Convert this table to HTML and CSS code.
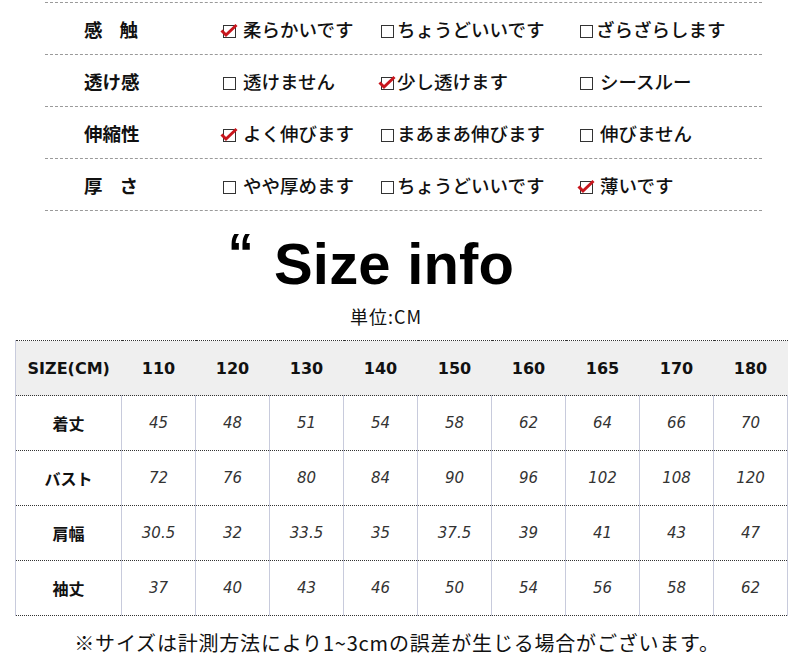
FILE: index.html
```html
<!DOCTYPE html>
<html lang="ja">
<head>
<meta charset="utf-8">
<title>Size info</title>
<link rel="stylesheet" href="styles.css">
</head>
<body>
<section class="feel">
  <div class="row">
    <div class="label">感<span class="sp"></span>触</div>
    <div class="opt"><svg class="cb" viewBox="0 0 18 16"><rect x="3.5" y="3.5" width="12" height="12" fill="#fff" stroke="#333"/><path d="M1.5 8.5 L6 13 L16.5 3" fill="none" stroke="#c8161d" stroke-width="3"/></svg>柔らかいです</div>
    <div class="opt tight"><svg class="cb" viewBox="0 0 18 16"><rect x="3.5" y="3.5" width="12" height="12" fill="#fff" stroke="#333"/></svg>ちょうどいいです</div>
    <div class="opt tight"><svg class="cb" viewBox="0 0 18 16"><rect x="3.5" y="3.5" width="12" height="12" fill="#fff" stroke="#333"/></svg>ざらざらします</div>
  </div>
  <div class="row">
    <div class="label">透け感</div>
    <div class="opt"><svg class="cb" viewBox="0 0 18 16"><rect x="3.5" y="3.5" width="12" height="12" fill="#fff" stroke="#333"/></svg>透けません</div>
    <div class="opt tight"><svg class="cb" viewBox="0 0 18 16"><rect x="3.5" y="3.5" width="12" height="12" fill="#fff" stroke="#333"/><path d="M1.5 8.5 L6 13 L16.5 3" fill="none" stroke="#c8161d" stroke-width="3"/></svg>少し透けます</div>
    <div class="opt"><svg class="cb" viewBox="0 0 18 16"><rect x="3.5" y="3.5" width="12" height="12" fill="#fff" stroke="#333"/></svg>シースルー</div>
  </div>
  <div class="row">
    <div class="label">伸縮性</div>
    <div class="opt"><svg class="cb" viewBox="0 0 18 16"><rect x="3.5" y="3.5" width="12" height="12" fill="#fff" stroke="#333"/><path d="M1.5 8.5 L6 13 L16.5 3" fill="none" stroke="#c8161d" stroke-width="3"/></svg>よく伸びます</div>
    <div class="opt tight"><svg class="cb" viewBox="0 0 18 16"><rect x="3.5" y="3.5" width="12" height="12" fill="#fff" stroke="#333"/></svg>まあまあ伸びます</div>
    <div class="opt"><svg class="cb" viewBox="0 0 18 16"><rect x="3.5" y="3.5" width="12" height="12" fill="#fff" stroke="#333"/></svg>伸びません</div>
  </div>
  <div class="row">
    <div class="label">厚<span class="sp"></span>さ</div>
    <div class="opt"><svg class="cb" viewBox="0 0 18 16"><rect x="3.5" y="3.5" width="12" height="12" fill="#fff" stroke="#333"/></svg>やや厚めます</div>
    <div class="opt tight"><svg class="cb" viewBox="0 0 18 16"><rect x="3.5" y="3.5" width="12" height="12" fill="#fff" stroke="#333"/></svg>ちょうどいいです</div>
    <div class="opt"><svg class="cb" viewBox="0 0 18 16"><rect x="3.5" y="3.5" width="12" height="12" fill="#fff" stroke="#333"/><path d="M1.5 8.5 L6 13 L16.5 3" fill="none" stroke="#c8161d" stroke-width="3"/></svg>薄いです</div>
  </div>
</section>

<h1 class="title"><span class="quote">“</span>Size info</h1>
<p class="unit">単位:CM</p>

<table class="size">
  <thead>
    <tr><th class="first">SIZE(CM)</th><th>110</th><th>120</th><th>130</th><th>140</th><th>150</th><th>160</th><th>165</th><th>170</th><th>180</th></tr>
  </thead>
  <tbody>
    <tr><th>着丈</th><td>45</td><td>48</td><td>51</td><td>54</td><td>58</td><td>62</td><td>64</td><td>66</td><td>70</td></tr>
    <tr><th>バスト</th><td>72</td><td>76</td><td>80</td><td>84</td><td>90</td><td>96</td><td>102</td><td>108</td><td>120</td></tr>
    <tr><th>肩幅</th><td>30.5</td><td>32</td><td>33.5</td><td>35</td><td>37.5</td><td>39</td><td>41</td><td>43</td><td>47</td></tr>
    <tr><th>袖丈</th><td>37</td><td>40</td><td>43</td><td>46</td><td>50</td><td>54</td><td>56</td><td>58</td><td>62</td></tr>
  </tbody>
</table>

<p class="note">※サイズは計測方法により1~3cmの誤差が生じる場合がございます。</p>
</body>
</html>
```

FILE: styles.css
```css
* { box-sizing: border-box; }
html, body { margin: 0; padding: 0; background: #fff; }
body {
  font-family: "Noto Sans CJK JP", "Liberation Sans", sans-serif;
  color: #111;
  width: 800px;
  height: 669px;
  overflow: hidden;
}

.feel {
  margin: 2px 0 0 45px;
  width: 717px;
  border-top: 1px dashed #9a9a9a;
}
.row {
  display: grid;
  grid-template-columns: 177px 158px 199px 1fr;
  align-items: center;
  height: 52px;
  border-bottom: 1px dashed #9a9a9a;
  font-size: 18.5px;
  line-height: 24px;
}
.label {
  padding-left: 39px;
  font-weight: 700;
  color: #111;
  display: flex;
  align-items: center;
}
.label .sp { display: inline-block; width: 17px; }
.opt {
  display: flex;
  align-items: center;
  gap: 5px;
  font-weight: 500;
  color: #111;
  white-space: nowrap;
}
.opt.tight { gap: 1px; }
.cb {
  width: 18px;
  height: 16px;
  flex: none;
  margin-top: 2px;
}
.row .opt:nth-child(2) { margin-left: -2px; }
.row .opt:nth-child(3) { margin-left: -2px; }
.row .opt:nth-child(4) { margin-left: -2px; }

.title {
  margin: 21px 0 0;
  text-align: center;
  font-family: "Liberation Sans", Arial, sans-serif;
  font-weight: 700;
  font-size: 58px;
  line-height: 64px;
  color: #000;
  letter-spacing: 0.2px;
  padding-right: 58px;
}
.quote {
  display: inline-block;
  font-size: 52px;
  line-height: 30px;
  vertical-align: 14px;
  margin-right: 20px;
}
.unit {
  margin: 8px 0 0;
  text-align: center;
  font-size: 18px;
  line-height: 24px;
  letter-spacing: 1px;
  color: #111;
  padding-right: 28px;
}

.size {
  margin: 12px 0 0 15px;
  width: 773px;
  border-collapse: collapse;
  table-layout: fixed;
  font-family: "DejaVu Sans", Verdana, sans-serif;
}
.size th, .size td {
  height: 55px;
  padding: 0;
  text-align: center;
  border-top: 1px dotted #333;
  border-bottom: 1px dotted #333;
}
.size thead th {
  background: #efefef;
  font-size: 16px;
  font-weight: 700;
  color: #111;
  width: 74px;
}
.size thead th.first {
  width: 106px;
  border-left: 1px solid #c8cbdc;
}
.size tbody th {
  font-family: "Noto Sans CJK JP", sans-serif;
  font-size: 16px;
  font-weight: 700;
  color: #111;
  border-left: 1px solid #c8cbdc;
  border-right: 1px solid #c8cbdc;
}
.size tbody td {
  font-size: 15px;
  font-style: italic;
  color: #333;
  border-right: 1px solid #c8cbdc;
}

.note {
  margin: 13px 0 0;
  text-align: center;
  font-size: 20px;
  line-height: 28px;
  letter-spacing: 0.8px;
  color: #111;
  padding-right: 6px;
}
```
